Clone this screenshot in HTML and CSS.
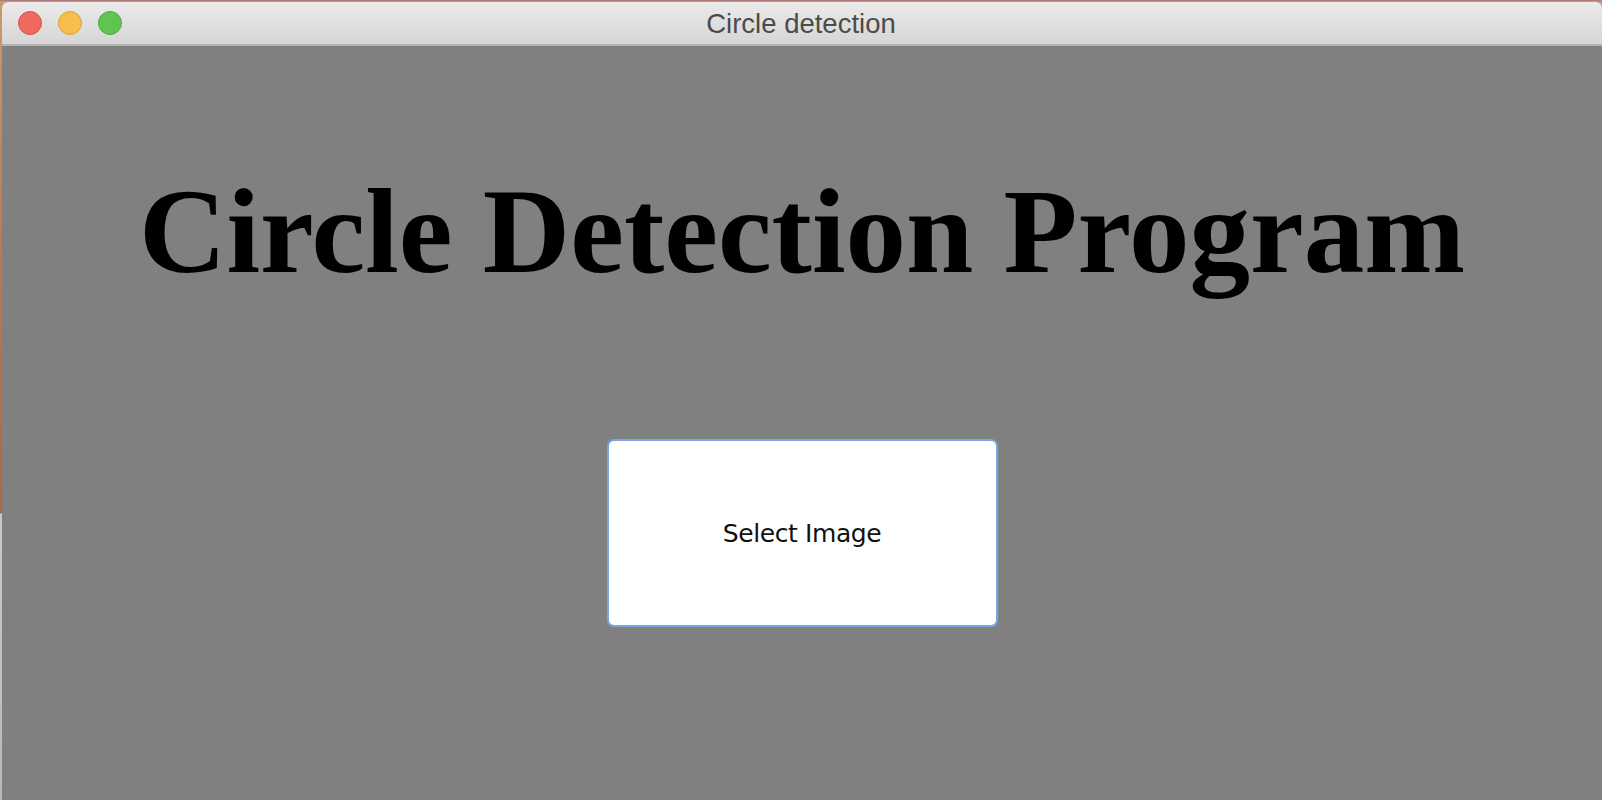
FILE: index.html
```html
<!DOCTYPE html>
<html>
<head>
<meta charset="utf-8">
<title>Circle detection</title>
<link rel="stylesheet" href="styles.css">
</head>
<body>
<div class="desktop">
  <div class="window">
    <div class="titlebar">
      <div class="lights">
        <span class="light red"></span>
        <span class="light yellow"></span>
        <span class="light green"></span>
      </div>
      <div class="wintitle">Circle detection</div>
    </div>
    <div class="content">
      <h1 class="heading">Circle Detection Program</h1>
      <button class="select-btn">Select Image</button>
    </div>
  </div>
</div>
</body>
</html>
```
FILE: styles.css
```css
html, body {
  margin: 0;
  padding: 0;
  width: 1602px;
  height: 800px;
  overflow: hidden;
}
.desktop {
  width: 1602px;
  height: 800px;
  background: linear-gradient(180deg, #c89a6e 0px, #b87a4e 260px, #a86a44 512px, #c9c9c9 513px, #b9b9b9 800px);
  padding-top: 1px;
  padding-left: 2px;
  box-sizing: border-box;
  border-top: 1px solid #b07a7a;
}
.window {
  width: 1600px;
  height: 798px;
  display: flex;
  flex-direction: column;
  border-radius: 6px 6px 0 0;
  overflow: hidden;
  background: #808080;
}
.titlebar {
  height: 42px;
  flex: 0 0 auto;
  background: linear-gradient(180deg, #ebebeb 0%, #d6d6d6 100%);
  border-bottom: 2px solid #b5b5b5;
  position: relative;
  display: flex;
  align-items: center;
  justify-content: center;
}
.lights {
  position: absolute;
  left: 16px;
  top: 9px;
  display: flex;
  gap: 16px;
}
.light {
  width: 22px;
  height: 22px;
  border-radius: 50%;
  display: block;
}
.red { background: #f0695f; border: 1px solid #d8534a; }
.yellow { background: #f7bd4d; border: 1px solid #dca13a; }
.green { background: #5fc552; border: 1px solid #4ea83f; }
.wintitle {
  font-family: "Liberation Sans", Arial, sans-serif;
  font-size: 27.5px;
  color: #4b4b4b;
  margin-left: -2px;
  margin-top: 1px;
}
.content {
  flex: 1;
  display: flex;
  flex-direction: column;
  align-items: center;
  background: #808080;
}
.heading {
  margin: 0;
  margin-top: 115px;
  font-family: "Liberation Serif", "Times New Roman", serif;
  font-weight: bold;
  font-size: 121px;
  line-height: 140px;
  color: #000;
}
.select-btn {
  margin-top: 138px;
  width: 391px;
  height: 188px;
  background: #fff;
  border: 2px solid #7aa5e3;
  border-radius: 7px;
  font-family: "DejaVu Sans", "Lucida Grande", sans-serif;
  font-size: 25px;
  letter-spacing: -0.4px;
  color: #111;
  padding: 0;
  margin-left: 0;
}
```
